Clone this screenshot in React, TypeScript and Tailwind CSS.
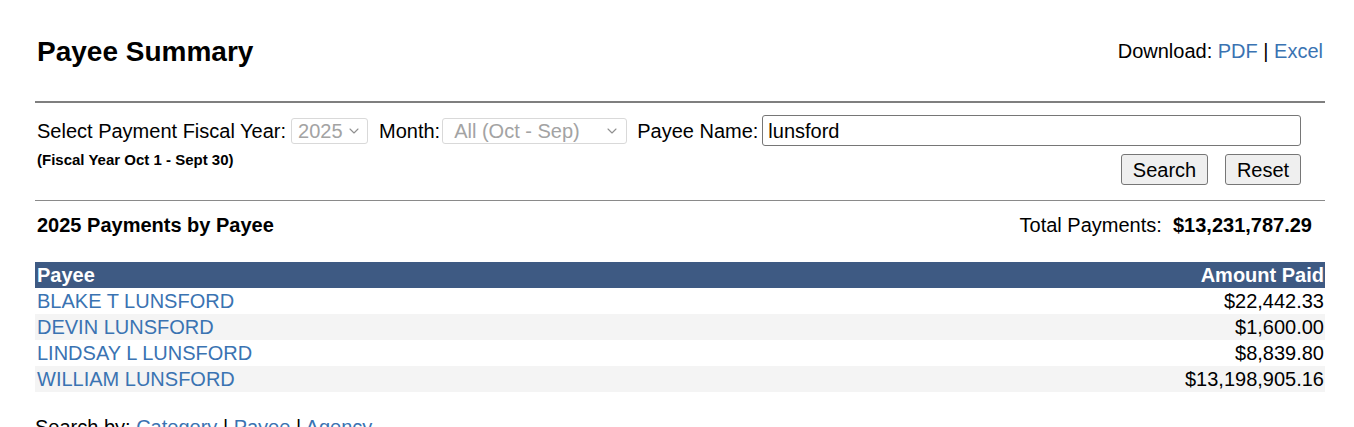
import { ChevronDown } from "lucide-react";

const rows = [
  { name: "BLAKE T LUNSFORD", amount: "$22,442.33" },
  { name: "DEVIN LUNSFORD", amount: "$1,600.00" },
  { name: "LINDSAY L LUNSFORD", amount: "$8,839.80" },
  { name: "WILLIAM LUNSFORD", amount: "$13,198,905.16" },
];

function FakeSelect({ value, width, pad }: { value: string; width: string; pad: string }) {
  return (
    <div
      className={`flex h-[26px] items-center justify-between rounded-[3px] border border-[#d9d9d9] pl-[6px] text-[#a3a3a3] ${width} ${pad}`}
    >
      <span>{value}</span>
      <ChevronDown className="h-[16px] w-[16px] text-[#8f8f8f]" strokeWidth={1.6} />
    </div>
  );
}

export default function App() {
  return (
    <div className="min-h-[427px] bg-white font-['Liberation_Sans',Arial,sans-serif] text-[20px] text-black">
      <div className="ml-[35px] w-[1290px]">
        {/* header */}
        <div className="flex items-center justify-between pt-[37px]">
          <h1 className="pl-[2px] text-[28px] leading-[30px] font-bold">Payee Summary</h1>
          <div className="pr-[2px] leading-[28px] -translate-y-px">
            Download: <a className="text-[#3a73b2]">PDF</a> | <a className="text-[#3a73b2]">Excel</a>
          </div>
        </div>
        <div className="mt-[34px] h-[2px] bg-[#7f7f7f]" />

        {/* filters */}
        <div className="mt-[12px] w-[1266px] pl-[2px]">
          <div className="flex items-center">
            <span>Select Payment Fiscal Year:</span>
            <div className="ml-[5px]">
              <FakeSelect value="2025" width="w-[77px]" pad="pr-[5px]" />
            </div>
            <span className="ml-[11px]">Month:</span>
            <div className="ml-[2px]">
              <FakeSelect value="All (Oct - Sep)" width="w-[185px]" pad="pl-[11px] pr-[6px]" />
            </div>
            <span className="ml-[10px]">Payee Name:</span>
            <div className="ml-[4px] flex h-[31px] flex-1 items-center rounded-[3px] border border-[#767676] pl-[5px]">
              lunsford
            </div>
          </div>
          <div className="flex items-start justify-between">
            <div className="mt-[6px] text-[15px] leading-[16px] font-bold">(Fiscal Year Oct 1 - Sept 30)</div>
            <div className="mt-[8px] flex gap-[17px]">
              <button className="h-[31px] w-[87px] rounded-[3px] border border-[#767676] bg-[#efefef] leading-none">
                Search
              </button>
              <button className="h-[31px] w-[76px] rounded-[3px] border border-[#767676] bg-[#efefef] leading-none">
                Reset
              </button>
            </div>
          </div>
        </div>
        <div className="mt-[15px] h-px bg-[#8a8a8a]" />

        {/* totals */}
        <div className="mt-[13px] flex items-center justify-between pl-[2px] pr-[13px] leading-[22px]">
          <span className="font-bold">2025 Payments by Payee</span>
          <span>
            Total Payments:&nbsp; <span className="font-bold">$13,231,787.29</span>
          </span>
        </div>

        {/* table */}
        <table className="mt-[26px] w-full border-collapse">
          <thead>
            <tr className="h-[26px] bg-[#3e5a83] text-white">
              <th className="px-[2px] text-left font-bold leading-[26px]">Payee</th>
              <th className="px-[1px] text-right font-bold leading-[26px]">Amount Paid</th>
            </tr>
          </thead>
          <tbody>
            {rows.map((r, i) => (
              <tr key={r.name} className={`h-[26px] ${i % 2 === 1 ? "bg-[#f4f4f4]" : "bg-white"}`}>
                <td className="px-[2px] leading-[26px]">
                  <a className="text-[#3a73b2]">{r.name}</a>
                </td>
                <td className="px-[1px] text-right leading-[26px]">{r.amount}</td>
              </tr>
            ))}
          </tbody>
        </table>

        <div className="mt-[24px] leading-[22px]">
          Search by: <a className="text-[#3a73b2]">Category</a> | <a className="text-[#3a73b2]">Payee</a> |{" "}
          <a className="text-[#3a73b2]">Agency</a>
        </div>
      </div>
    </div>
  );
}
